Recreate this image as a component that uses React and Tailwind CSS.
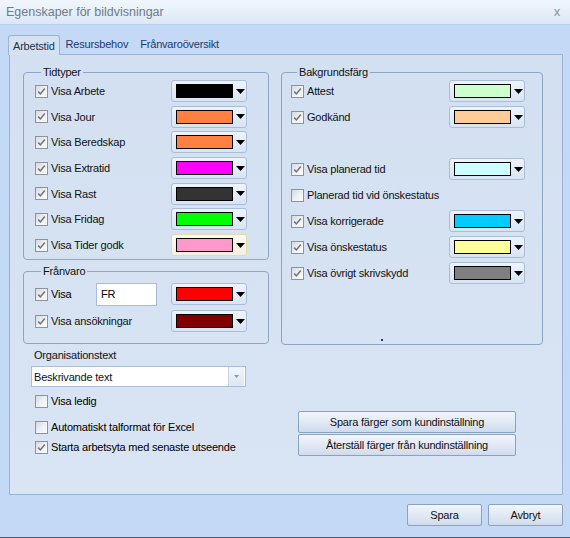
import React from "react";

const Check = ({ checked }) => (
  <span className="w-[13px] h-[13px] shrink-0 border border-[#8f9399] bg-gradient-to-br from-[#d6d9dd] via-[#eef0f2] to-[#fbfbfb] flex items-center justify-center">
    {checked && (
      <svg width="9" height="9" viewBox="0 0 9 9">
        <path d="M1.2 4.6 L3.4 6.9 L7.8 1.6" stroke="#74777c" strokeWidth="1.6" fill="none" />
      </svg>
    )}
  </span>
);

const Row = ({ checked, label, color, focus }) => (
  <div className="flex items-center h-[22px]">
    <Check checked={checked} />
    <span className="ml-[3px] flex-1 text-[#111]">{label}</span>
    {color && <ColorCombo color={color} focus={focus} />}
  </div>
);

const ColorCombo = ({ color, focus }) => (
  <div
    className={
      focus
        ? "w-[76px] h-[22px] rounded-[3px] border border-[#e6d9a6] bg-gradient-to-b from-[#fdfbf2] to-[#f3eee0] flex items-center pl-[4px]"
        : "w-[76px] h-[22px] rounded-[3px] border border-[#a9bcd8] bg-gradient-to-b from-[#eef4fc] to-[#d8e4f4] flex items-center pl-[4px]"
    }
  >
    <span className="w-[57px] h-[14px] border border-black" style={{ background: color }} />
    <svg className="ml-[3px]" width="9" height="5" viewBox="0 0 9 5">
      <path d="M0 0 H9 L4.5 5 Z" fill="#000" />
    </svg>
  </div>
);

const Button = ({ children, className }) => (
  <button
    className={
      "h-[22px] rounded-[2px] border border-[#8aa1c0] bg-gradient-to-b from-[#f2f6fc] via-[#e1e9f5] to-[#cfdbed] text-[#111] " +
      className
    }
  >
    {children}
  </button>
);

export default function App() {
  return (
    <div
      className="w-[570px] h-[538px] bg-[#c4d9f5] border-b border-[#4d6078] text-[11px] leading-[14px] tracking-[-0.2px] overflow-hidden"
      style={{ fontFamily: '"Liberation Sans", Arial, sans-serif' }}
    >
      {/* title bar */}
      <div className="h-[25px] bg-gradient-to-b from-[#f1f6fc] to-[#dce8f6] border-b border-[#b9cfed] flex items-center justify-between pl-[6px] pr-[10px]">
        <span className="text-[12.5px] tracking-normal text-[#6f7b8a]">Egenskaper för bildvisningar</span>
        <span className="text-[13px] text-[#8a939e]">x</span>
      </div>

      {/* tabs */}
      <div className="flex items-end pl-[8px] pt-[9px] h-[29px]">
        <div className="h-[20px] px-[4px] pt-[3px] border border-b-0 border-[#9bb3d3] rounded-t-[3px] bg-[#d4e1f2] text-[#1d3350] relative top-[1px]">
          Arbetstid
        </div>
        <span className="ml-[6px] pb-[3px] text-[#1c3a6b]">Resursbehov</span>
        <span className="ml-[12px] pb-[3px] text-[#1c3a6b]">Frånvaroöversikt</span>
      </div>

      {/* panel */}
      <div className="ml-[9px] w-[554px] h-[441px] border border-[#9bb3d3] bg-gradient-to-b from-[#d3e0f1] to-[#d9e5f4] pt-[10px] pl-[13px]">
        <div className="flex">
          <div className="flex flex-col">
            <fieldset className="w-[246px] h-[195px] border border-[#8fa5c2] rounded-[4px] pl-[11px] pr-[21px]">
              <legend className="ml-[6px] px-[2px] text-[#111]">Tidtyper</legend>
              <div className="flex flex-col gap-[3.7px] pt-[1px]">
                <Row checked label="Visa Arbete" color="#000000" />
                <Row checked label="Visa Jour" color="#ff8040" />
                <Row checked label="Visa Beredskap" color="#ff8040" />
                <Row checked label="Visa Extratid" color="#ff00ff" />
                <Row checked label="Visa Rast" color="#333333" />
                <Row checked label="Visa Fridag" color="#00ff00" />
                <Row checked label="Visa Tider godk" color="#ff99cc" focus />
              </div>
            </fieldset>
            <fieldset className="mt-[4px] w-[246px] h-[80px] border border-[#8fa5c2] rounded-[4px] pl-[11px] pr-[21px]">
              <legend className="ml-[6px] px-[2px] text-[#111]">Frånvaro</legend>
              <div className="flex flex-col gap-[5px] pt-[5px]">
                <div className="flex items-center h-[22px]">
                  <Check checked />
                  <span className="ml-[3px] w-[45px]">Visa</span>
                  <span className="w-[61px] h-[23px] bg-white border border-[#a9bcd8] pl-[4px] flex items-center">FR</span>
                  <span className="flex-1" />
                  <ColorCombo color="#ff0000" />
                </div>
                <Row checked label="Visa ansökningar" color="#800000" />
              </div>
            </fieldset>
          </div>

          <fieldset className="relative ml-[12px] w-[262px] h-[280px] border border-[#8fa5c2] rounded-[4px] pl-[9px] pr-[17px]">
            <legend className="ml-[6px] px-[2px] text-[#111]">Bakgrundsfärg</legend>
            <div className="flex flex-col gap-[4px] pt-[1px]">
              <Row checked label="Attest" color="#ccffcc" />
              <Row checked label="Godkänd" color="#ffcc99" />
              <div className="h-[22px]" />
              <Row checked label="Visa planerad tid" color="#ccffff" />
              <Row label="Planerad tid vid önskestatus" />
              <Row checked label="Visa korrigerade" color="#00ccff" />
              <Row checked label="Visa önskestatus" color="#ffff99" />
              <Row checked label="Visa övrigt skrivskydd" color="#808080" />
            </div>
            <span className="absolute left-[99px] bottom-[3px] w-[2px] h-[2px] bg-[#1f3a6b]" />
          </fieldset>
        </div>

        <div className="flex -mt-[2px]">
          <div className="w-[275px] flex flex-col">
            <span className="ml-[11px] mt-[5px] text-[#111]">Organisationstext</span>
            <div className="ml-[8px] mt-[4px] w-[215px] h-[21px] bg-white border border-[#a9bcd8] flex items-center">
              <span className="flex-1 pl-[2px] text-[#111]">Beskrivande text</span>
              <span className="w-[16px] h-[19px] mr-px bg-gradient-to-b from-[#f2f6fb] to-[#dde7f3] border-l border-[#c9d6e8] flex items-center justify-center">
                <svg width="5" height="3" viewBox="0 0 5 3">
                  <path d="M0 0 H5 L2.5 3 Z" fill="#8a99ad" />
                </svg>
              </span>
            </div>
            <div className="ml-[12px] mt-[6px] flex items-center h-[16px]">
              <Check />
              <span className="ml-[3px]">Visa ledig</span>
            </div>
            <div className="ml-[12px] mt-[10px] flex items-center h-[16px]">
              <Check />
              <span className="ml-[3px]">Automatiskt talformat för Excel</span>
            </div>
            <div className="ml-[12px] mt-[4px] flex items-center h-[16px]">
              <Check checked />
              <span className="ml-[3px]">Starta arbetsyta med senaste utseende</span>
            </div>
          </div>
          <div className="flex flex-col pt-[68px]">
            <Button className="w-[218px]">Spara färger som kundinställning</Button>
            <Button className="w-[218px] mt-px">Återställ färger från kundinställning</Button>
          </div>
        </div>
      </div>

      {/* bottom buttons */}
      <div className="flex justify-end gap-[6px] pr-[7px] mt-[9px]">
        <Button className="w-[75px]">Spara</Button>
        <Button className="w-[75px]">Avbryt</Button>
      </div>
    </div>
  );
}
